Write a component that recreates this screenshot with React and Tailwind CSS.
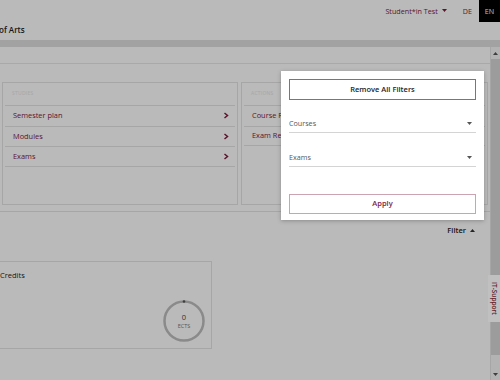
import React from 'react';

const maroon = 'text-[#801a3c]';

function ListCard({ label, items, className }) {
  return (
    <div className={`border border-[#e4e4e4] bg-white h-[123px] ${className}`}>
      <div className="h-[22px] px-[9px] pt-[7px] text-[5px] uppercase tracking-wider text-[#e6e6e6]">{label}</div>
      <div className="mx-[2px]">
        {items.map(item => (
          <div key={item} className="h-[20.5px] border-t border-[#e4e4e4] last:border-b flex items-center justify-between pl-[8px] pr-[6px]">
            <span className={`text-[7.4px] ${maroon} whitespace-nowrap`}>{item}</span>
            <svg width="6" height="7" viewBox="0 0 6 7" className="text-[#801a3c]">
              <path d="M1.5 1 L4.5 3.5 L1.5 6" stroke="currentColor" strokeWidth="1.5" fill="none" />
            </svg>
          </div>
        ))}
      </div>
    </div>
  );
}

export default function App() {
  return (
    <div className="relative w-[500px] h-[380px] overflow-hidden bg-white text-[#222]" style={{ fontFamily: '"Open Sans", "Liberation Sans", sans-serif' }}>
      {/* header */}
      <header className="h-[40px] bg-white">
        <div className="h-[22px] flex items-center justify-end">
          <span className={`text-[7.2px] ${maroon} flex items-center gap-[4px]`}>
            Student*in Test
            <svg width="5" height="3" viewBox="0 0 5 3"><path d="M0 0 L5 0 L2.5 3 Z" fill="#801a3c" /></svg>
          </span>
          <span className={`ml-[16px] text-[7.2px] ${maroon}`}>DE</span>
          <span className="ml-[7px] w-[21px] h-[22px] bg-black text-white text-[7.2px] flex items-center justify-center">EN</span>
        </div>
        <div className="text-[8px] font-semibold leading-none pt-[4px] -ml-[1px]">of Arts</div>
      </header>
      <div className="h-[7px] bg-[#dedede]" />

      <div className="flex h-[333px]">
        <main className="flex-1 min-w-0">
          <div className="h-[17px] border-b border-[#e8e8e8]" />
          <section className="pt-[18px] pb-[6px] border-b border-[#e4e4e4] flex">
            <ListCard className="ml-[2px] w-[236px]" label="Studies" items={['Semester plan', 'Modules', 'Exams']} />
            <ListCard className="ml-[3px] flex-1 mr-[2px]" label="Actions" items={['Course Registration', 'Exam Registration']} />
          </section>
          <div className="flex justify-end pr-[15px] pt-[13px]">
            <span className="text-[7.5px] font-semibold flex items-center gap-[4px]">
              Filter
              <svg width="5" height="3" viewBox="0 0 5 3"><path d="M0 3 L5 3 L2.5 0 Z" fill="#333" /></svg>
            </span>
          </div>
          <div className="mt-[25px] -ml-[12px] w-[224px] h-[88px] border border-[#e4e4e4] bg-white flex flex-col">
            <div className="pl-[11px] pt-[8px] text-[7.5px]">Credits</div>
            <div className="flex-1 flex justify-end items-end pr-[6px] pb-[6px]">
              <div className="relative w-[42px] h-[42px]">
                <svg width="42" height="42" viewBox="0 0 42 42" className="absolute inset-0">
                  <circle cx="21" cy="21" r="19.5" stroke="#bdbdbd" strokeWidth="2.5" fill="none" />
                  <circle cx="21" cy="1.5" r="1.3" fill="#555" />
                </svg>
                <div className="absolute inset-0 flex flex-col items-center justify-center leading-none pt-[1px]">
                  <span className="text-[7.5px] text-[#444]">0</span>
                  <span className="text-[5.5px] text-[#777] mt-[2px]">ECTS</span>
                </div>
              </div>
            </div>
          </div>
        </main>

        {/* scrollbar */}
        <div className="w-[10px] flex flex-col bg-[#f6f6f6] border-l border-[#e4e4e4]">
          <div className="h-[12px] flex items-center justify-center">
            <svg width="5" height="3" viewBox="0 0 5 3"><path d="M0 3 L2.5 0 L5 3 Z" fill="#555" /></svg>
          </div>
          <div className="h-[296px] bg-[#d6d6d6]" />
          <div className="flex-1" />
          <div className="h-[12px] flex items-center justify-center">
            <svg width="5" height="3" viewBox="0 0 5 3"><path d="M0 0 L2.5 3 L5 0 Z" fill="#555" /></svg>
          </div>
        </div>
      </div>

      {/* backdrop */}
      <div className="absolute inset-0 bg-black/[0.27] z-10" />

      {/* filter popover */}
      <div className="absolute left-[281px] top-[71px] w-[203px] h-[149px] bg-white z-20 shadow-[0_1px_4px_rgba(0,0,0,0.25)] px-[8px] pt-[8px]">
        <button className="w-full h-[21px] border border-[#777] text-[7.5px] font-semibold text-[#222] flex items-center justify-center">
          Remove All Filters
        </button>
        <div className="mt-[15px] h-[18px] border-b border-[#d4d4d4] flex items-center justify-between pr-[4px]">
          <span className="text-[7.2px] text-[#555]">Courses</span>
          <svg width="5" height="3" viewBox="0 0 5 3"><path d="M0 0 L5 0 L2.5 3 Z" fill="#555" /></svg>
        </div>
        <div className="mt-[16px] h-[18px] border-b border-[#d4d4d4] flex items-center justify-between pr-[4px]">
          <span className="text-[7.2px] text-[#555]">Exams</span>
          <svg width="5" height="3" viewBox="0 0 5 3"><path d="M0 0 L5 0 L2.5 3 Z" fill="#555" /></svg>
        </div>
        <button className={`mt-[27px] w-full h-[20px] border border-[#caa4b1] text-[7.5px] font-semibold ${maroon} flex items-center justify-center`}>
          Apply
        </button>
      </div>

      {/* IT-Support tab */}
      <div className="absolute right-0 top-[275px] w-[12px] h-[47px] bg-[#c0c0c0] z-20 flex items-center justify-center">
        <span className="text-[6.5px] font-semibold text-[#5e1f35] [writing-mode:vertical-rl] whitespace-nowrap leading-none">IT-Support</span>
      </div>
    </div>
  );
}
